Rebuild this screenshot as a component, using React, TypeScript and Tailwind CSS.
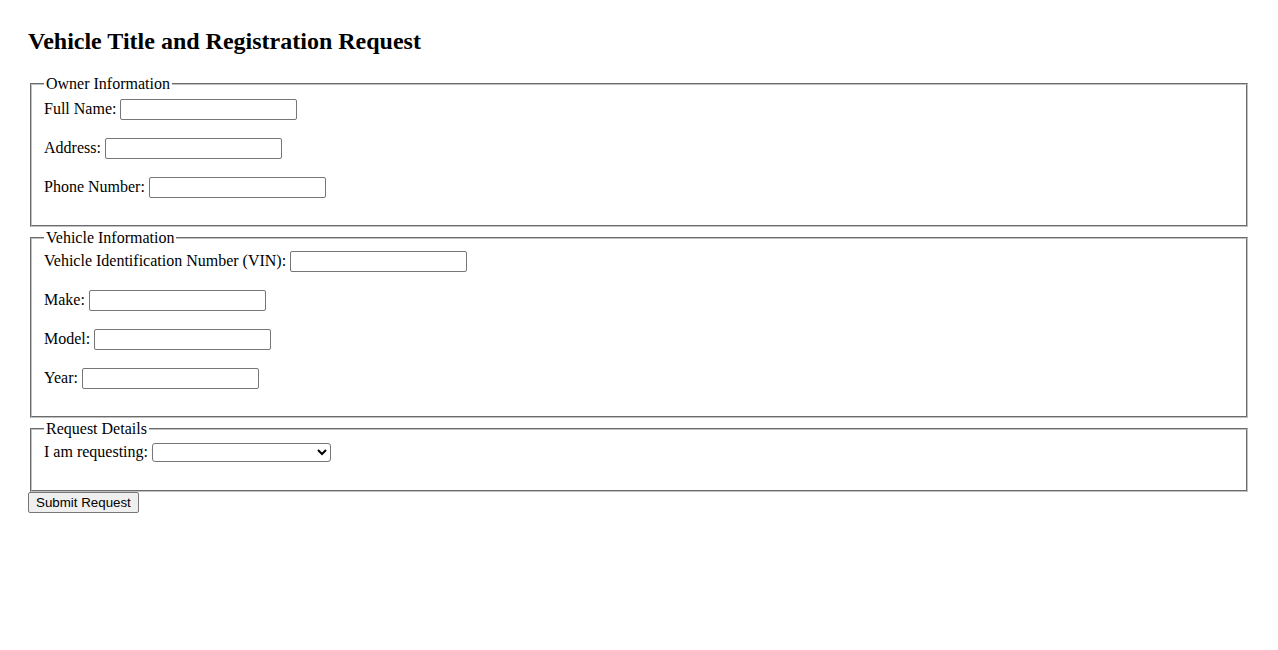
import { useState } from 'react';

const serif = "[font-family:'Liberation_Serif','Times_New_Roman',serif]";
const sans = "[font-family:'Liberation_Sans',Arial,sans-serif]";

function Field({ label, name }: { label: string; name: string }) {
  const [value, setValue] = useState('');
  return (
    <div className="flex items-baseline gap-[4px] mb-[18px]">
      <label htmlFor={name} className="leading-[18.4px]">{label}</label>
      <input
        id={name}
        name={name}
        value={value}
        onChange={(e) => setValue(e.target.value)}
        className={`w-[177px] h-[21px] px-[2px] border border-[#767676] rounded-[2px] bg-white text-[13.333px] ${sans} text-black`}
      />
    </div>
  );
}

export default function App() {
  const [request, setRequest] = useState('');

  return (
    <div className={`${serif} text-black text-[16px] bg-white min-h-screen pt-[28px] px-[28px]`}>
      <h2 className="text-[24px] font-bold leading-[27.6px] mb-[19px]">Vehicle Title and Registration Request</h2>

      <form onSubmit={(e) => e.preventDefault()}>
        <fieldset className="mx-[2px] border-2 [border-style:groove] border-[#c0c0c0] px-[12px] pt-[5.6px] pb-[9px]">
          <legend className="px-[2px] leading-[18.4px]">Owner Information</legend>
          <Field label="Full Name:" name="fullName" />
          <Field label="Address:" name="address" />
          <Field label="Phone Number:" name="phone" />
        </fieldset>

        <fieldset className="mt-[2px] mx-[2px] border-2 [border-style:groove] border-[#c0c0c0] px-[12px] pt-[3.6px] pb-[9px]">
          <legend className="px-[2px] leading-[18.4px]">Vehicle Information</legend>
          <Field label="Vehicle Identification Number (VIN):" name="vin" />
          <Field label="Make:" name="make" />
          <Field label="Model:" name="model" />
          <Field label="Year:" name="year" />
        </fieldset>

        <fieldset className="mt-[2px] mx-[2px] border-2 [border-style:groove] border-[#c0c0c0] px-[12px] pt-[5px] pb-[10px]">
          <legend className="px-[2px] leading-[18.4px]">Request Details</legend>
          <div className="flex items-center gap-[4px] mb-[18px]">
            <label htmlFor="request" className="leading-[18.4px]">I am requesting:</label>
            <select
              id="request"
              value={request}
              onChange={(e) => setRequest(e.target.value)}
              className={`w-[179px] h-[19px] border border-[#767676] rounded-[3px] bg-white text-[13.333px] ${sans} text-black`}
            >
              <option value=""></option>
              <option value="title">Title</option>
              <option value="registration">Registration</option>
              <option value="both">Title and Registration</option>
            </select>
          </div>
        </fieldset>

        <button
          type="submit"
          className={`block h-[21px] px-[7px] border border-[#767676] rounded-[2px] bg-[#efefef] text-[13.333px] ${sans} text-black leading-none`}
        >
          Submit Request
        </button>
      </form>
    </div>
  );
}
